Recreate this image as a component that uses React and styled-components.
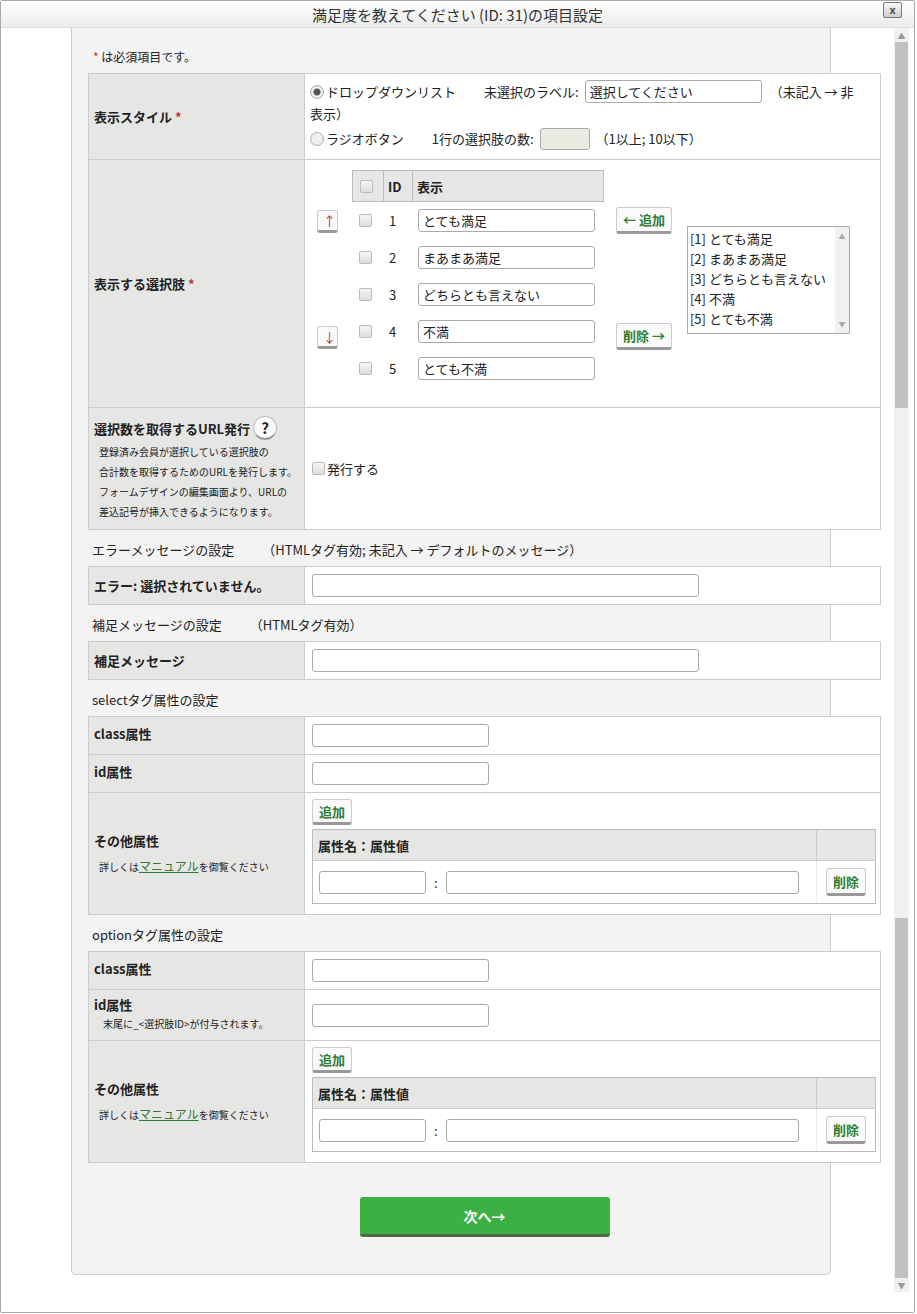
import React from "react";
import styled, { createGlobalStyle } from "styled-components";

const Global = createGlobalStyle`
  body { margin: 0; font-family: "Noto Sans CJK JP", "Liberation Sans", sans-serif; font-size: 13px; color: #222; }
  * { box-sizing: border-box; }
`;

// window frame
const Win = styled.div`
  width: 915px; height: 1313px;
  border: 1px solid #a9a9a9; border-radius: 2px;
  display: flex; flex-direction: column; background: #fff; overflow: hidden;
`;
const TitleBar = styled.div`
  height: 27px; flex: none; position: relative;
  background: linear-gradient(#fff, #ececec);
  border-bottom: 1px solid #ddd;
  display: flex; align-items: center; justify-content: center;
  font-size: 15px; color: #333;
`;
const Close = styled.div`
  position: absolute; right: 12px; top: 1px;
  width: 19px; height: 16px; border: 1px solid #777; border-radius: 2px;
  background: linear-gradient(#fafafa, #ccc);
  font: bold 11px "Liberation Sans", sans-serif; color: #444;
  display: flex; align-items: center; justify-content: center;
`;
const Body = styled.div`
  flex: 1; display: flex; min-height: 0;
`;
const Main = styled.div`
  flex: 1; padding-left: 70px;
`;
const Scroll = styled.div`
  width: 15px; margin: 0 5px 20px 0; background: #f1f1f1;
  display: flex; flex-direction: column; align-items: stretch;
`;
const ScrollArrow = styled.div`
  height: 14px; color: #999; font-size: 8px; display: flex; align-items: center; justify-content: center;
`;
const Thumb = styled.div`
  height: ${p => p.h}px; background: ${p => (p.on ? "#c1c1c1" : "#f1f1f1")}; margin: 0 1px;
  flex: ${p => (p.grow ? 1 : "none")};
`;

const Panel = styled.div`
  width: 760px; height: 1247px;
  background: #f3f3f3; border: 1px solid #ccc; border-top: none;
  border-radius: 0 0 5px 5px; padding: 20px 0 0 16px;
`;
const Note = styled.div`
  padding-left: 5px; height: 25px; font-size: 12px;
`;
const Req = styled.span` color: #c0392b; `;
const SectionHead = styled.div`
  padding: 10px 0 0 4px; height: 36px;
`;
const Gap = styled.span` margin-left: 28px; `;

const Table = styled.div`
  width: 793px; border: 1px solid #ccc; background: #fff;
`;
const Row = styled.div`
  display: flex; min-height: ${p => p.h}px;
  & + & { border-top: 1px solid #ccc; }
`;
const Label = styled.div`
  width: 216px; flex: none; background: #e6e7e5; border-right: 1px solid #ccc;
  padding: ${p => (p.top ? `${p.top}px 5px 0` : "0 5px")}; display: flex; flex-direction: column;
  justify-content: ${p => (p.top ? "flex-start" : "center")};
  font-weight: bold; font-size: 13px;
`;
const Sub = styled.div`
  font-weight: normal; font-size: 10px; line-height: 20px; padding-left: ${p => p.pl || 5}px;
  margin-top: ${p => p.mt || 0}px;
`;
const Cell = styled.div`
  flex: 1; padding: ${p => p.pad || "0 7px"}; display: flex; flex-direction: column;
  justify-content: ${p => (p.start ? "flex-start" : "center")};
`;
const Line = styled.div` display: flex; align-items: center; height: ${p => p.h || 22}px; `;
const Radio = styled.span`
  width: 14px; height: 14px; border-radius: 50%; border: 1px solid #aaa; margin-right: 2px;
  background: radial-gradient(circle, ${p => (p.on ? "#555 0 3px, #eee 4px" : "#eee 0")});
`;
const Input = styled.input`
  width: ${p => p.w}px; height: ${p => p.ht || 23}px; border: 1px solid #aaa; border-radius: 3px;
  font: inherit; padding: 0 4px; background: ${p => p.bg || "#fff"}; color: #222;
  margin: ${p => p.m || 0};
`;
const Check = styled.span`
  width: 13px; height: 13px; border: 1px solid #bbb; border-radius: 2px;
  background: linear-gradient(#f6f6f6, #ddd); display: inline-block; margin-right: ${p => p.mr || 0}px;
`;
const Btn = styled.button`
  height: ${p => p.h || 27}px; padding: 0 ${p => p.px || 6}px; font: ${p => (p.thin ? "normal" : "bold")} 13px "Noto Sans CJK JP", sans-serif;
  color: ${p => p.c || "#2e7d32"}; background: #fafafa; border: 1px solid #ccc; border-bottom: 3px solid #999;
  border-radius: 3px;
`;

// choices block
const Choices = styled.div` display: flex; padding: 10px 0 0 12px; height: 247px; `;
const Arrows = styled.div` width: 21px; padding-top: 40px; display: flex; flex-direction: column; gap: 93px; `;
const Grid = styled.div` margin-left: 14px; width: 252px; `;
const GHead = styled.div`
  display: grid; grid-template-columns: 30px 29px 1fr; height: 32px;
  background: #e6e7e5; border: 1px solid #bbb; font-weight: bold;
  & > div { display: flex; align-items: center; padding-left: 4px; }
  & > div:first-child { padding-left: 7px; }
  & > div + div { border-left: 1px solid #bbb; }
`;
const GRow = styled.div`
  display: grid; grid-template-columns: 30px 29px 1fr; height: 37px; align-items: center;
  padding-left: 7px; &:first-of-type { margin-top: 4px; }
`;
const Ops = styled.div` margin-left: 12px; padding-top: 37px; display: flex; flex-direction: column; gap: 89px; `;
const ListBox = styled.div`
  margin: 56px 0 0 15px; width: 163px; height: 108px; border: 1px solid #aaa; display: flex;
`;
const Items = styled.div` flex: 1; padding: 2px 2px; line-height: 20px; `;
const LBar = styled.div`
  width: 14px; background: #f1f1f1; color: #aaa; font-size: 7px;
  display: flex; flex-direction: column; justify-content: space-between; align-items: center; padding: 4px 0;
`;
const Help = styled.span`
  width: 24px; height: 24px; border-radius: 50%; border: 1px solid #bbb; border-bottom: 2px solid #999;
  background: #fafafa; display: inline-flex; align-items: center; justify-content: center;
  font-size: 15px; margin-left: 3px;
`;

// attribute editor
const AttrBox = styled.div` width: 564px; border: 1px solid #bbb; margin-top: 4px; `;
const AttrHead = styled.div`
  display: flex; height: 31px; background: #e6e7e5; font-weight: bold; border-bottom: 1px solid #ccc;
  & > div:first-child { flex: 1; padding-left: 5px; display: flex; align-items: center; }
  & > div:last-child { width: 59px; border-left: 1px solid #ccc; }
`;
const AttrRow = styled.div`
  display: flex; height: 42px; align-items: center;
  & > div:first-child { flex: 1; padding-left: 6px; display: flex; align-items: center; gap: 8px; }
  & > div:last-child { width: 59px; height: 100%; border-left: 1px solid #eee; display: flex; align-items: center; justify-content: center; }
`;
const Link = styled.span` color: #2e7d32; text-decoration: underline; font-size: 12px; `;

const Footer = styled.div` width: 793px; display: flex; justify-content: center; padding-top: 34px; `;
const Next = styled.button`
  width: 250px; height: 40px; border: none; border-radius: 3px; border-bottom: 3px solid #4c6b42;
  background: #3cb043; color: #fff; font: bold 14px "Noto Sans CJK JP", sans-serif;
`;

const items = ["とても満足", "まあまあ満足", "どちらとも言えない", "不満", "とても不満"];

const AttrEditor = () => (
  <Cell pad="6px 6px 9px 7px" start>
    <div><Btn h={26} px={6}>追加</Btn></div>
    <AttrBox>
      <AttrHead><div>属性名：属性値</div><div /></AttrHead>
      <AttrRow>
        <div><Input w={107} />:<Input w={353} /></div>
        <div><Btn h={28} px={6}>削除</Btn></div>
      </AttrRow>
    </AttrBox>
  </Cell>
);

const OtherLabel = () => (
  <Label>
    その他属性
    <Sub mt={6}>詳しくは<Link>マニュアル</Link>を御覧ください</Sub>
  </Label>
);

export default function App() {
  return (
    <>
      <Global />
      <Win>
        <TitleBar>
          満足度を教えてください (ID: 31)の項目設定
          <Close>x</Close>
        </TitleBar>
        <Body>
          <Main>
            <Panel>
              <Note><Req>*</Req> は必須項目です。</Note>
              <Table>
                <Row h={85}>
                  <Label><span>表示スタイル <Req>*</Req></span></Label>
                  <Cell pad="5px 5px">
                    <Line>
                      <Radio on />ドロップダウンリスト<Gap>未選択のラベル:</Gap>
                      <Input w={177} defaultValue="選択してください" m="0 8px 0 6px" />
                      （未記入 → 非
                    </Line>
                    <Line>表示）</Line>
                    <Line h={28}>
                      <Radio />ラジオボタン<Gap>1行の選択肢の数:</Gap>
                      <Input w={50} ht={22} bg="#ebebe4" m="0 6px" />
                      （1以上; 10以下）
                    </Line>
                  </Cell>
                </Row>
                <Row h={248}>
                  <Label><span>表示する選択肢 <Req>*</Req></span></Label>
                  <Choices>
                    <Arrows>
                      <Btn h={23} px={5} c="#c0392b" thin>↑</Btn>
                      <Btn h={23} px={5} c="#c0392b" thin>↓</Btn>
                    </Arrows>
                    <Grid>
                      <GHead>
                        <div><Check /></div><div>ID</div><div>表示</div>
                      </GHead>
                      {items.map((t, i) => (
                        <GRow key={t}>
                          <Check />
                          <span>{i + 1}</span>
                          <Input w={177} defaultValue={t} />
                        </GRow>
                      ))}
                    </Grid>
                    <Ops>
                      <Btn px={6}>← 追加</Btn>
                      <Btn px={6}>削除 →</Btn>
                    </Ops>
                    <ListBox>
                      <Items>{items.map((t, i) => <div key={t}>[{i + 1}] {t}</div>)}</Items>
                      <LBar><span>▲</span><span>▼</span></LBar>
                    </ListBox>
                  </Choices>
                </Row>
                <Row h={122}>
                  <Label top={6}>
                    <Line h={28}>選択数を取得するURL発行<Help>?</Help></Line>
                    <Sub>登録済み会員が選択している選択肢の<br />合計数を取得するためのURLを発行します。<br />フォームデザインの編集画面より、URLの<br />差込記号が挿入できるようになります。</Sub>
                  </Label>
                  <Cell><Line><Check mr={2} />発行する</Line></Cell>
                </Row>
              </Table>
              <SectionHead>エラーメッセージの設定<Gap>（HTMLタグ有効; 未記入 → デフォルトのメッセージ）</Gap></SectionHead>
              <Table>
                <Row h={37}><Label>エラー: 選択されていません。</Label><Cell><Input w={387} /></Cell></Row>
              </Table>
              <SectionHead>補足メッセージの設定<Gap>（HTMLタグ有効）</Gap></SectionHead>
              <Table>
                <Row h={37}><Label>補足メッセージ</Label><Cell><Input w={387} /></Cell></Row>
              </Table>
              <SectionHead>selectタグ属性の設定</SectionHead>
              <Table>
                <Row h={37}><Label top={7}>class属性</Label><Cell><Input w={177} /></Cell></Row>
                <Row h={38}><Label top={7}>id属性</Label><Cell><Input w={177} /></Cell></Row>
                <Row h={122}><OtherLabel /><AttrEditor /></Row>
              </Table>
              <SectionHead>optionタグ属性の設定</SectionHead>
              <Table>
                <Row h={37}><Label top={7}>class属性</Label><Cell><Input w={177} /></Cell></Row>
                <Row h={51}>
                  <Label top={5}>
                    id属性
                    <Sub pl={9}>末尾に_&lt;選択肢ID&gt;が付与されます。</Sub>
                  </Label>
                  <Cell><Input w={177} /></Cell>
                </Row>
                <Row h={122}><OtherLabel /><AttrEditor /></Row>
              </Table>
              <Footer><Next>次へ→</Next></Footer>
            </Panel>
          </Main>
          <Scroll>
            <ScrollArrow>▲</ScrollArrow>
            <Thumb on h={366} />
            <Thumb h={510} />
            <Thumb on h={365} grow />
            <ScrollArrow>▼</ScrollArrow>
          </Scroll>
        </Body>
      </Win>
    </>
  );
}
